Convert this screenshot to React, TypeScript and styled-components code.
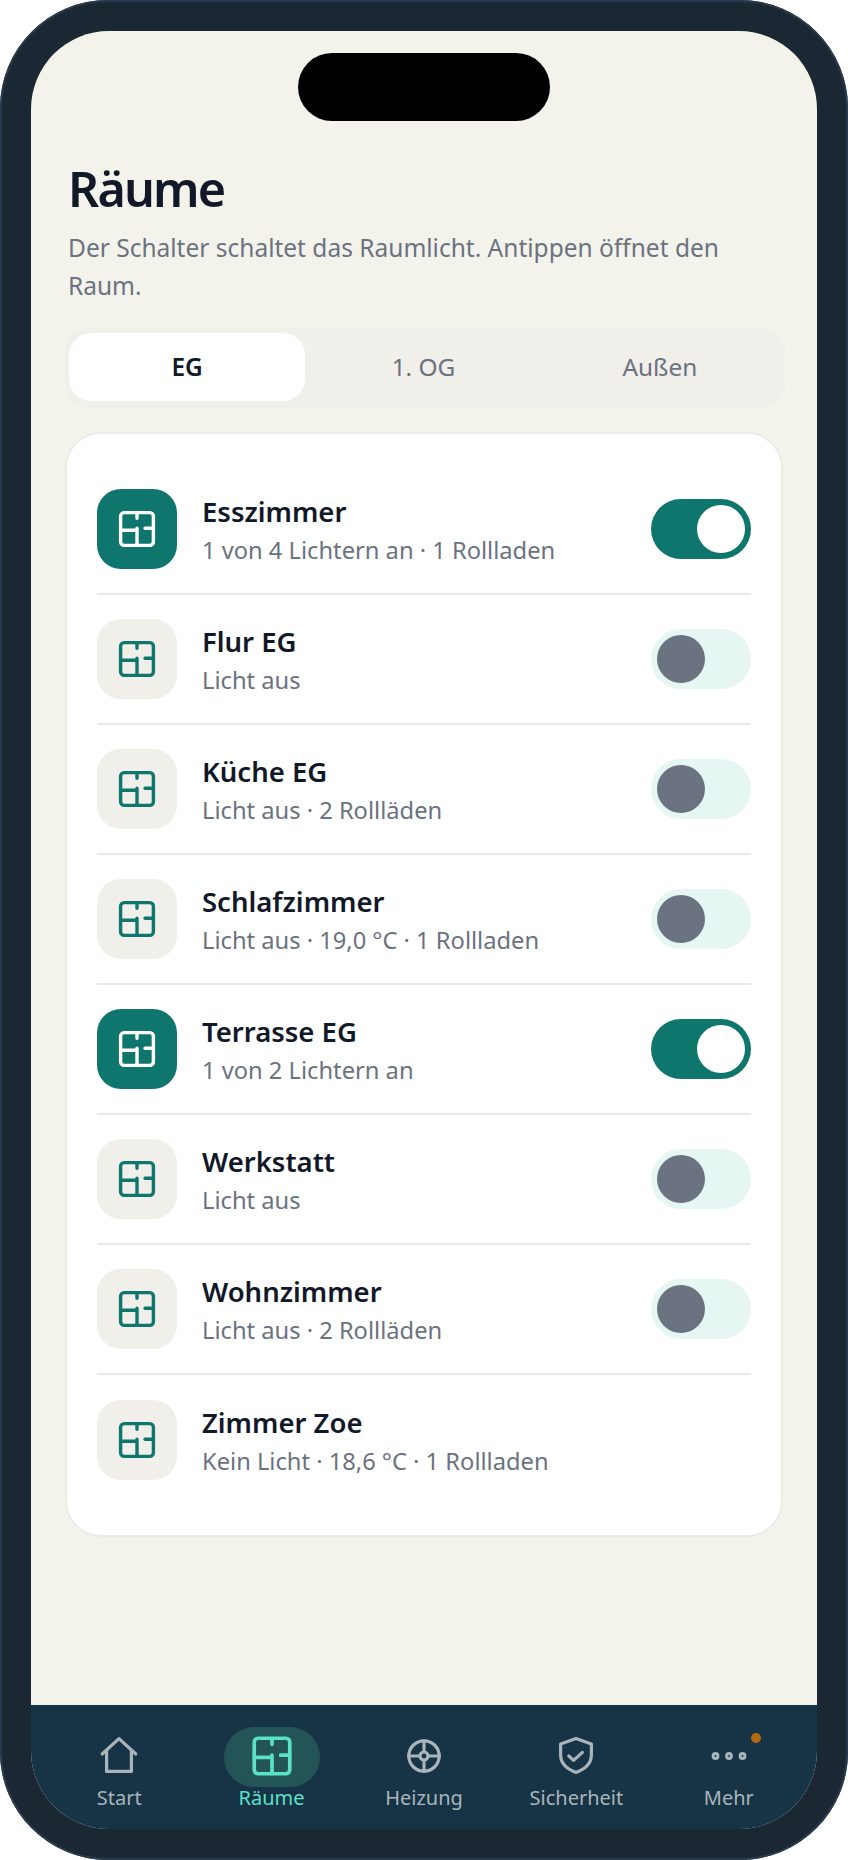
import React from 'react'
import styled, { createGlobalStyle } from 'styled-components'

const GlobalStyle = createGlobalStyle`
  html, body {
    margin: 0;
    padding: 0;
    background: #ffffff;
  }

  body {
    font-family: 'Noto Sans', 'Open Sans', sans-serif;
  }

  * {
    box-sizing: border-box;
  }
`

const Phone = styled.div`
  width: 848px;
  height: 1860px;
  padding: 31px;
  border-radius: 108px;
  background-color: #1b2733;
  box-shadow: inset 0 0 0 2px #2a3a4e;
`

const Screen = styled.div`
  position: relative;
  display: flex;
  flex-direction: column;
  height: 100%;
  border-radius: 78px;
  overflow: hidden;
  background-color: #f3f3ec;
`

const Island = styled.div`
  position: absolute;
  top: 22px;
  left: 267px;
  width: 252px;
  height: 68px;
  border-radius: 34px;
  background-color: #000000;
`

const Content = styled.main`
  flex: 1;
  min-height: 0;
  padding: 123px 34px 0;
`

const Title = styled.h1`
  margin: 0 0 0 3px;
  font-size: 48.5px;
  line-height: 68px;
  font-weight: 600;
  letter-spacing: -1.8px;
  color: #111827;
`

const Subtitle = styled.p`
  margin: 7px 0 0 3px;
  font-size: 24.5px;
  line-height: 38.4px;
  color: #6b7280;
`

const Tabs = styled.div`
  display: grid;
  grid-template-columns: repeat(3, 1fr);
  margin: 22px -2px 0 0;
  padding: 5px 7px 7px 4px;
  height: 80px;
  border-radius: 24px;
  background-color: #f0efea;
`

const Tab = styled.button<{ $active?: boolean }>`
  border: none;
  border-radius: 22px;
  font-family: inherit;
  font-size: 24.4px;
  font-weight: ${({ $active }) => ($active ? 600 : 400)};
  color: ${({ $active }) => ($active ? '#111827' : '#6b7280')};
  background-color: ${({ $active }) => ($active ? '#ffffff' : 'transparent')};
`

const Card = styled.section`
  margin-top: 24px;
  padding: 31px 30px 30px;
  border: 2px solid #ecebe8;
  border-radius: 36px;
  background-color: #ffffff;
`

const Row = styled.div`
  display: flex;
  align-items: center;
  height: 130px;
  gap: 25px;

  &:not(:last-child) {
    border-bottom: 2px solid #e9e9e7;
  }
`

const RoomIcon = styled.div<{ $on?: boolean }>`
  display: flex;
  align-items: center;
  justify-content: center;
  flex-shrink: 0;
  width: 80px;
  height: 80px;
  border-radius: 24px;
  color: ${({ $on }) => ($on ? '#ffffff' : '#0f766e')};
  background-color: ${({ $on }) => ($on ? '#0f766e' : '#f0efea')};
`

const RoomText = styled.div`
  flex: 1;
  min-width: 0;
  padding-top: 3px;
`

const RoomName = styled.div`
  font-size: 27.5px;
  line-height: 36px;
  font-weight: 600;
  color: #111827;
`

const RoomInfo = styled.div`
  margin-top: 4px;
  font-size: 23.7px;
  line-height: 32px;
  color: #6b7280;
`

const Toggle = styled.div<{ $on?: boolean }>`
  display: flex;
  justify-content: ${({ $on }) => ($on ? 'flex-end' : 'flex-start')};
  flex-shrink: 0;
  width: 100px;
  height: 60px;
  padding: 6px;
  border-radius: 30px;
  background-color: ${({ $on }) => ($on ? '#0f766e' : '#e6f7f3')};
`

const Knob = styled.div<{ $on?: boolean }>`
  width: 48px;
  height: 48px;
  border-radius: 50%;
  background-color: ${({ $on }) => ($on ? '#ffffff' : '#6b7280')};
`

const Nav = styled.nav`
  display: grid;
  grid-template-columns: repeat(5, 1fr);
  flex-shrink: 0;
  height: 124px;
  padding: 22px 12px 0;
  background-color: #163445;
`

const NavItem = styled.div<{ $active?: boolean }>`
  display: flex;
  flex-direction: column;
  align-items: center;
  font-size: 20px;
  line-height: 28px;
  color: ${({ $active }) => ($active ? '#5ce0c8' : '#a9b4bb')};
`

const NavIcon = styled.div<{ $active?: boolean }>`
  position: relative;
  display: flex;
  align-items: center;
  justify-content: center;
  flex-shrink: 0;
  width: 96px;
  height: 60px;
  padding-bottom: 2px;
  margin-bottom: -3px;
  border-radius: 30px;
  background-color: ${({ $active }) => ($active ? '#235558' : 'transparent')};
`

const Badge = styled.span`
  position: absolute;
  top: 6px;
  right: 16px;
  width: 10px;
  height: 10px;
  border-radius: 50%;
  background-color: #b5690e;
`

const FloorPlan = ({ size = 48 }: { size?: number }) => (
  <svg width={size} height={size} viewBox="0 0 24 24" fill="none" stroke="currentColor" strokeWidth="1.7" strokeLinecap="round" strokeLinejoin="round">
    <rect x="3.8" y="3.8" width="16.4" height="16.4" rx="1.8" />
    <path d="M12 3.8v2.8M12 11.6v8.6M3.8 12.6H12M16 11.6h4.2" />
  </svg>
)

const HomeIcon = () => (
  <svg width="48" height="48" viewBox="0 0 24 24" fill="none" stroke="currentColor" strokeWidth="1.6" strokeLinejoin="round" strokeLinecap="round">
    <path d="M3.6 11 12 3.3l8.4 7.7" />
    <path d="M5.8 9.2v10.5h12.4V9.2" />
  </svg>
)

const HeatIcon = () => (
  <svg width="48" height="48" viewBox="0 0 24 24" fill="none" stroke="currentColor" strokeWidth="1.6">
    <circle cx="12" cy="12" r="7.6" />
    <circle cx="12" cy="12" r="2" />
    <path d="M12 3.6V10M12 14v6.4M3.6 12H10M14 12h6.4" />
  </svg>
)

const ShieldIcon = () => (
  <svg width="48" height="48" viewBox="0 0 24 24" fill="none" stroke="currentColor" strokeWidth="1.6" strokeLinejoin="round" strokeLinecap="round">
    <path d="M12 3.3 19.7 6v5.4c0 4.2-3.2 7.2-7.7 8.8-4.5-1.6-7.7-4.6-7.7-8.8V6z" />
    <path d="m8.4 12 2.4 2.2 4.4-4" />
  </svg>
)

const DotsIcon = () => (
  <svg width="48" height="48" viewBox="0 0 24 24" fill="none" stroke="currentColor" strokeWidth="1.5">
    <circle cx="5.25" cy="12" r="1.2" />
    <circle cx="12" cy="12" r="1.2" />
    <circle cx="18.75" cy="12" r="1.2" />
  </svg>
)

const rooms = [
  { name: 'Esszimmer', info: '1 von 4 Lichtern an · 1 Rollladen', on: true, toggle: true },
  { name: 'Flur EG', info: 'Licht aus', on: false, toggle: true },
  { name: 'Küche EG', info: 'Licht aus · 2 Rollläden', on: false, toggle: true },
  { name: 'Schlafzimmer', info: 'Licht aus · 19,0 °C · 1 Rollladen', on: false, toggle: true },
  { name: 'Terrasse EG', info: '1 von 2 Lichtern an', on: true, toggle: true },
  { name: 'Werkstatt', info: 'Licht aus', on: false, toggle: true },
  { name: 'Wohnzimmer', info: 'Licht aus · 2 Rollläden', on: false, toggle: true },
  { name: 'Zimmer Zoe', info: 'Kein Licht · 18,6 °C · 1 Rollladen', on: false, toggle: false },
]

const App = () => (
  <Phone>
    <GlobalStyle />
    <Screen>
      <Island />
      <Content>
        <Title>Räume</Title>
        <Subtitle>Der Schalter schaltet das Raumlicht. Antippen öffnet den Raum.</Subtitle>
        <Tabs>
          <Tab $active>EG</Tab>
          <Tab>1. OG</Tab>
          <Tab>Außen</Tab>
        </Tabs>
        <Card>
          {rooms.map((room) => (
            <Row key={room.name}>
              <RoomIcon $on={room.on}>
                <FloorPlan />
              </RoomIcon>
              <RoomText>
                <RoomName>{room.name}</RoomName>
                <RoomInfo>{room.info}</RoomInfo>
              </RoomText>
              {room.toggle && (
                <Toggle $on={room.on}>
                  <Knob $on={room.on} />
                </Toggle>
              )}
            </Row>
          ))}
        </Card>
      </Content>
      <Nav>
        <NavItem>
          <NavIcon><HomeIcon /></NavIcon>
          Start
        </NavItem>
        <NavItem $active>
          <NavIcon $active><FloorPlan size={52} /></NavIcon>
          Räume
        </NavItem>
        <NavItem>
          <NavIcon><HeatIcon /></NavIcon>
          Heizung
        </NavItem>
        <NavItem>
          <NavIcon><ShieldIcon /></NavIcon>
          Sicherheit
        </NavItem>
        <NavItem>
          <NavIcon>
            <DotsIcon />
            <Badge />
          </NavIcon>
          Mehr
        </NavItem>
      </Nav>
    </Screen>
  </Phone>
)

export default App
